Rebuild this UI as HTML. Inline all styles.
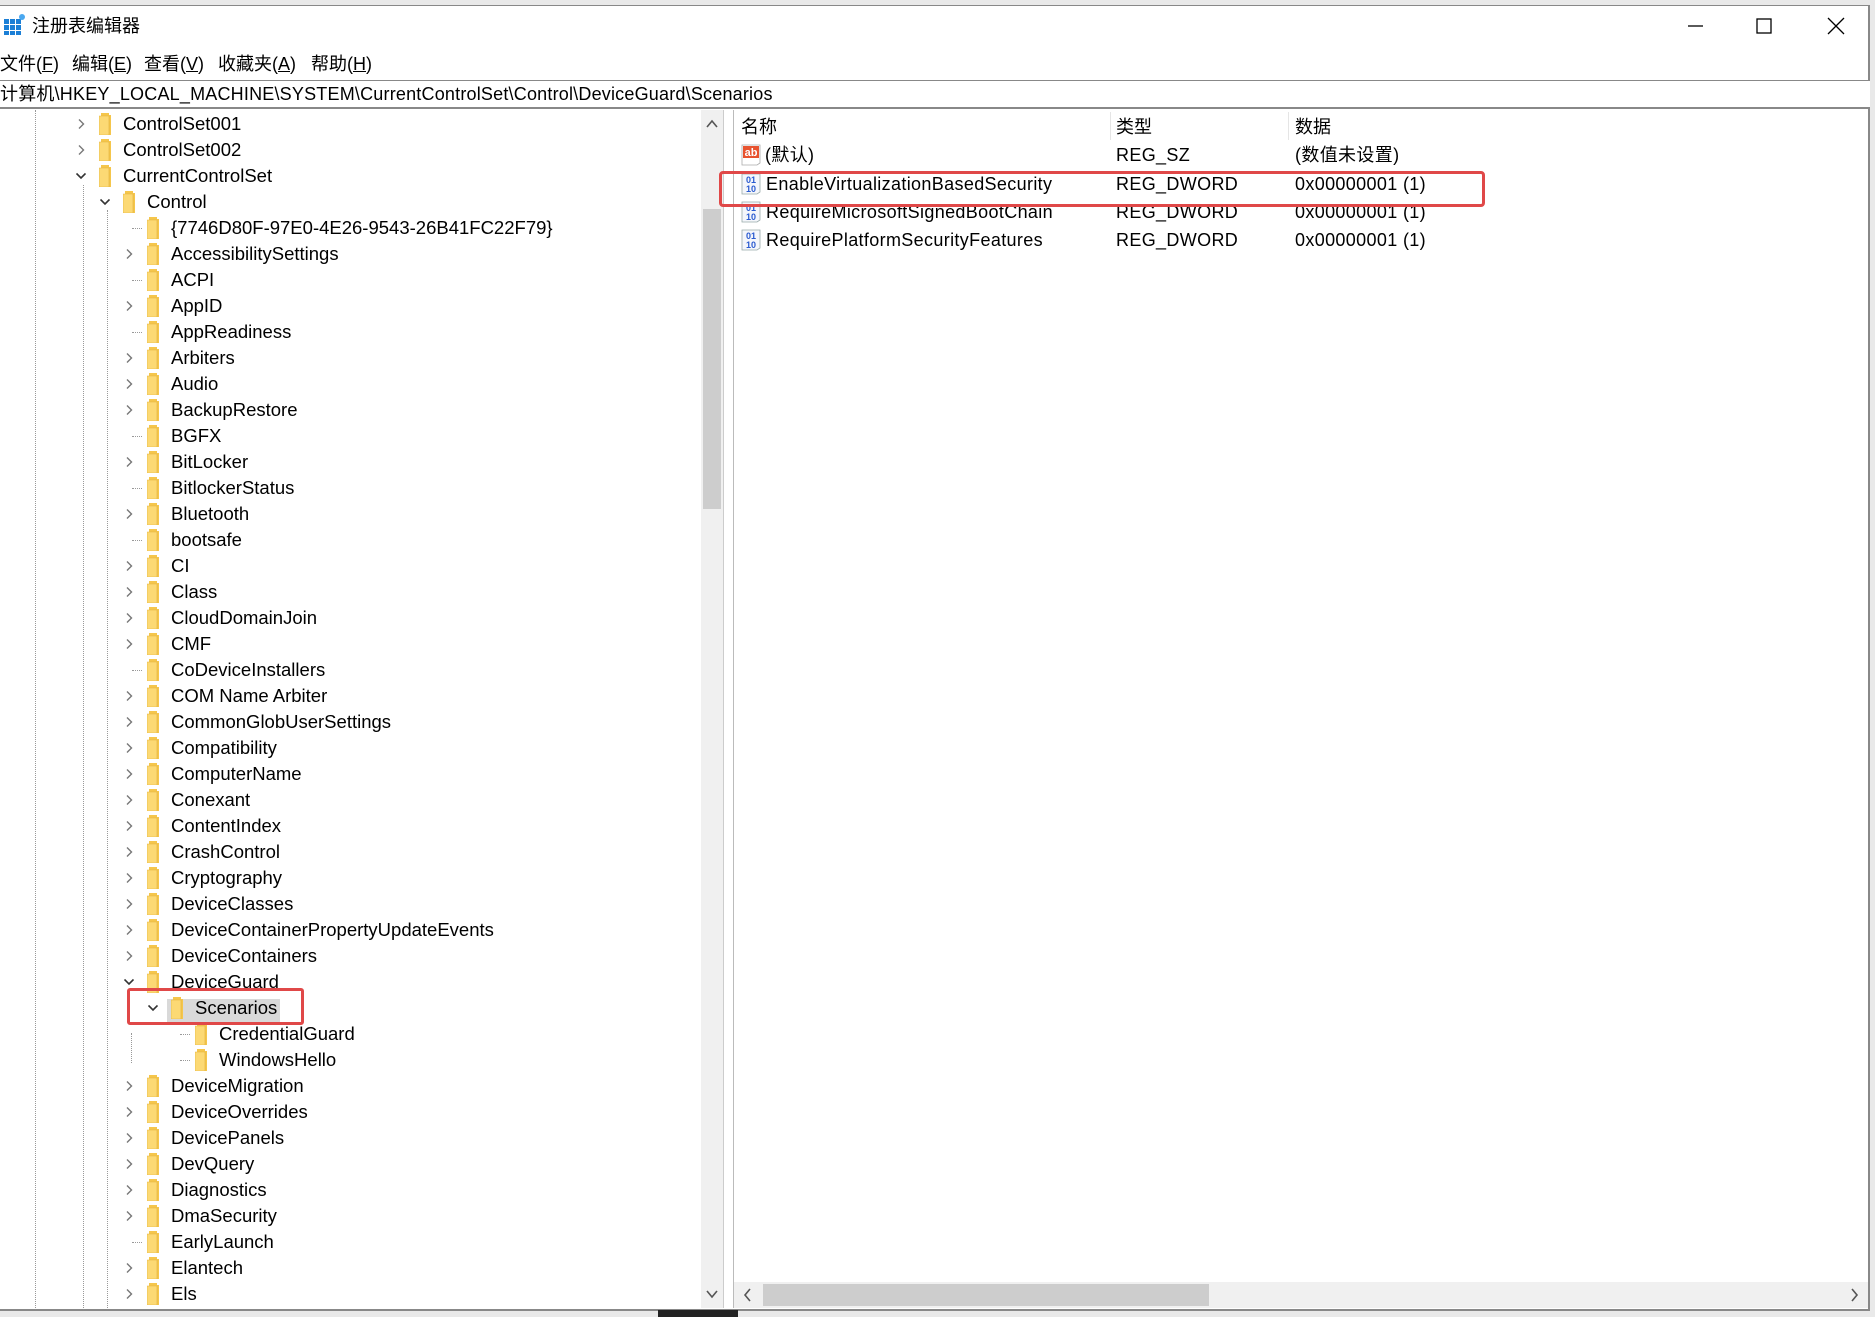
<!DOCTYPE html>
<html><head><meta charset="utf-8">
<style>
*{margin:0;padding:0;box-sizing:border-box}
body{width:1875px;height:1317px;background:#e9e9e9;position:relative;overflow:hidden;font-family:"Liberation Sans","Noto Sans CJK SC",sans-serif;color:#000}
.win{position:absolute;left:0;top:5px;width:1870px;height:1306px;background:#fff;border-top:1px solid #888;border-right:2px solid #888;border-bottom:2px solid #888}
.abs{position:absolute}
.t{position:absolute;font-size:18px;line-height:26px;white-space:nowrap}
.lt{letter-spacing:0.35px}
.r{position:absolute;height:26px;line-height:26px;font-size:18.5px;white-space:nowrap}
.fold{position:absolute;width:12px;height:22px;top:2px}
.chev{position:absolute;top:8px;width:10px;height:10px}
.lh{position:absolute;top:13px;width:10px;border-top:1px dotted #999}
.lv{position:absolute;border-left:1px dotted #999}
.sh{transform:translateY(1px)}
</style></head><body>
<div class="win"></div>
<!-- title -->
<svg class="abs" style="left:4px;top:13px" width="22" height="22" viewBox="0 0 22 22"><rect x="0" y="6" width="5" height="5" fill="#1b7fd6"/><rect x="6" y="6" width="5" height="5" fill="#1b7fd6"/><rect x="0" y="12" width="5" height="5" fill="#1b7fd6"/><rect x="6" y="12" width="5" height="5" fill="#1b7fd6"/><rect x="12" y="12" width="5" height="5" fill="#1b7fd6"/><rect x="0" y="18" width="5" height="4" fill="#1b7fd6"/><rect x="6" y="18" width="5" height="4" fill="#1b7fd6"/><rect x="12" y="18" width="5" height="4" fill="#1b7fd6"/><rect x="12" y="6" width="5" height="5" fill="#1b7fd6"/><circle cx="18" cy="4" r="3" fill="#4aa8f0"/></svg>
<div class="t" style="left:32px;top:13px;font-size:18px">注册表编辑器</div>
<svg class="abs" style="left:1687px;top:20px" width="18" height="12"><line x1="1" y1="6" x2="16" y2="6" stroke="#000" stroke-width="1.3"/></svg>
<svg class="abs" style="left:1756px;top:18px" width="16" height="16"><rect x="1" y="1" width="14" height="14" fill="none" stroke="#000" stroke-width="1.3"/></svg>
<svg class="abs" style="left:1827px;top:17px" width="18" height="18"><path d="M1 1L17 17M17 1L1 17" stroke="#000" stroke-width="1.3"/></svg>
<!-- menu -->
<div class="t" style="left:0;top:51px;font-size:18px">文件(<u>F</u>)</div>
<div class="t" style="left:72px;top:51px;font-size:18px">编辑(<u>E</u>)</div>
<div class="t" style="left:144px;top:51px;font-size:18px">查看(<u>V</u>)</div>
<div class="t" style="left:218px;top:51px;font-size:18px">收藏夹(<u>A</u>)</div>
<div class="t" style="left:311px;top:51px;font-size:18px">帮助(<u>H</u>)</div>
<!-- address -->
<div class="abs" style="left:0;top:80px;width:1870px;height:29px;border-top:1px solid #888;border-bottom:2px solid #888;background:#fff"></div>
<div class="t" style="left:0;top:81px;font-size:18px;letter-spacing:0.2px">计算机\HKEY_LOCAL_MACHINE\SYSTEM\CurrentControlSet\Control\DeviceGuard\Scenarios</div>
<!-- tree pane -->
<div class="abs" style="left:0;top:110px;width:701px;height:1198px;overflow:hidden">
<div style="position:relative;top:-110px">
<div class="lv" style="left:35px;top:110px;height:1200px"></div>
<div class="lv" style="left:83px;top:185px;height:1125px"></div>
<div class="lv" style="left:107px;top:210px;height:1100px"></div>
<div class="lv" style="left:131px;top:1033px;height:30px"></div>
</div></div>
<svg width="0" height="0" style="position:absolute"><defs>
<symbol id="f" viewBox="0 0 12 22"><path d="M2 0h8v2h2v20H2z" fill="#f5c64c"/><path d="M0 3h10v19H0z" fill="#fcd974"/><path d="M0 3h10v19H0z" fill="none" stroke="#e2b23c" stroke-width=".6"/></symbol>
<symbol id="cr" viewBox="0 0 10 10"><path d="M3 0.5L7.5 5L3 9.5" fill="none" stroke="#777" stroke-width="1.4"/></symbol>
<symbol id="cd" viewBox="0 0 10 10"><path d="M0.5 2.5L5 7L9.5 2.5" fill="none" stroke="#333" stroke-width="1.6"/></symbol>
</defs></svg>
<div class="abs" style="left:167px;top:999px;width:113px;height:26px;background:#d9d9d9"></div>
<div class="sh" style="position:absolute;left:0;top:0;width:701px;height:1308px;overflow:hidden">
<div class="r" style="top:110px;left:0"><svg class="chev" style="left:76px"><use href="#cr"/></svg><svg class="fold" style="left:99px"><use href="#f"/></svg><span style="position:absolute;left:123px">ControlSet001</span></div>
<div class="r" style="top:136px;left:0"><svg class="chev" style="left:76px"><use href="#cr"/></svg><svg class="fold" style="left:99px"><use href="#f"/></svg><span style="position:absolute;left:123px">ControlSet002</span></div>
<div class="r" style="top:162px;left:0"><svg class="chev" style="left:76px"><use href="#cd"/></svg><svg class="fold" style="left:99px"><use href="#f"/></svg><span style="position:absolute;left:123px">CurrentControlSet</span></div>
<div class="r" style="top:188px;left:24px"><svg class="chev" style="left:76px"><use href="#cd"/></svg><svg class="fold" style="left:99px"><use href="#f"/></svg><span style="position:absolute;left:123px">Control</span></div>
</div>
<div class="sh" style="position:absolute;left:48px;top:0;width:653px;height:1308px;overflow:hidden">
<div class="r" style="top:214px"><div class="lh" style="left:84px"></div><svg class="fold" style="left:99px"><use href="#f"/></svg><span style="position:absolute;left:123px">{7746D80F-97E0-4E26-9543-26B41FC22F79}</span></div>
<div class="r" style="top:240px"><svg class="chev" style="left:76px"><use href="#cr"/></svg><svg class="fold" style="left:99px"><use href="#f"/></svg><span style="position:absolute;left:123px">AccessibilitySettings</span></div>
<div class="r" style="top:266px"><div class="lh" style="left:84px"></div><svg class="fold" style="left:99px"><use href="#f"/></svg><span style="position:absolute;left:123px">ACPI</span></div>
<div class="r" style="top:292px"><svg class="chev" style="left:76px"><use href="#cr"/></svg><svg class="fold" style="left:99px"><use href="#f"/></svg><span style="position:absolute;left:123px">AppID</span></div>
<div class="r" style="top:318px"><div class="lh" style="left:84px"></div><svg class="fold" style="left:99px"><use href="#f"/></svg><span style="position:absolute;left:123px">AppReadiness</span></div>
<div class="r" style="top:344px"><svg class="chev" style="left:76px"><use href="#cr"/></svg><svg class="fold" style="left:99px"><use href="#f"/></svg><span style="position:absolute;left:123px">Arbiters</span></div>
<div class="r" style="top:370px"><svg class="chev" style="left:76px"><use href="#cr"/></svg><svg class="fold" style="left:99px"><use href="#f"/></svg><span style="position:absolute;left:123px">Audio</span></div>
<div class="r" style="top:396px"><svg class="chev" style="left:76px"><use href="#cr"/></svg><svg class="fold" style="left:99px"><use href="#f"/></svg><span style="position:absolute;left:123px">BackupRestore</span></div>
<div class="r" style="top:422px"><div class="lh" style="left:84px"></div><svg class="fold" style="left:99px"><use href="#f"/></svg><span style="position:absolute;left:123px">BGFX</span></div>
<div class="r" style="top:448px"><svg class="chev" style="left:76px"><use href="#cr"/></svg><svg class="fold" style="left:99px"><use href="#f"/></svg><span style="position:absolute;left:123px">BitLocker</span></div>
<div class="r" style="top:474px"><div class="lh" style="left:84px"></div><svg class="fold" style="left:99px"><use href="#f"/></svg><span style="position:absolute;left:123px">BitlockerStatus</span></div>
<div class="r" style="top:500px"><svg class="chev" style="left:76px"><use href="#cr"/></svg><svg class="fold" style="left:99px"><use href="#f"/></svg><span style="position:absolute;left:123px">Bluetooth</span></div>
<div class="r" style="top:526px"><div class="lh" style="left:84px"></div><svg class="fold" style="left:99px"><use href="#f"/></svg><span style="position:absolute;left:123px">bootsafe</span></div>
<div class="r" style="top:552px"><svg class="chev" style="left:76px"><use href="#cr"/></svg><svg class="fold" style="left:99px"><use href="#f"/></svg><span style="position:absolute;left:123px">CI</span></div>
<div class="r" style="top:578px"><svg class="chev" style="left:76px"><use href="#cr"/></svg><svg class="fold" style="left:99px"><use href="#f"/></svg><span style="position:absolute;left:123px">Class</span></div>
<div class="r" style="top:604px"><svg class="chev" style="left:76px"><use href="#cr"/></svg><svg class="fold" style="left:99px"><use href="#f"/></svg><span style="position:absolute;left:123px">CloudDomainJoin</span></div>
<div class="r" style="top:630px"><svg class="chev" style="left:76px"><use href="#cr"/></svg><svg class="fold" style="left:99px"><use href="#f"/></svg><span style="position:absolute;left:123px">CMF</span></div>
<div class="r" style="top:656px"><div class="lh" style="left:84px"></div><svg class="fold" style="left:99px"><use href="#f"/></svg><span style="position:absolute;left:123px">CoDeviceInstallers</span></div>
<div class="r" style="top:682px"><svg class="chev" style="left:76px"><use href="#cr"/></svg><svg class="fold" style="left:99px"><use href="#f"/></svg><span style="position:absolute;left:123px">COM Name Arbiter</span></div>
<div class="r" style="top:708px"><svg class="chev" style="left:76px"><use href="#cr"/></svg><svg class="fold" style="left:99px"><use href="#f"/></svg><span style="position:absolute;left:123px">CommonGlobUserSettings</span></div>
<div class="r" style="top:734px"><svg class="chev" style="left:76px"><use href="#cr"/></svg><svg class="fold" style="left:99px"><use href="#f"/></svg><span style="position:absolute;left:123px">Compatibility</span></div>
<div class="r" style="top:760px"><svg class="chev" style="left:76px"><use href="#cr"/></svg><svg class="fold" style="left:99px"><use href="#f"/></svg><span style="position:absolute;left:123px">ComputerName</span></div>
<div class="r" style="top:786px"><svg class="chev" style="left:76px"><use href="#cr"/></svg><svg class="fold" style="left:99px"><use href="#f"/></svg><span style="position:absolute;left:123px">Conexant</span></div>
<div class="r" style="top:812px"><svg class="chev" style="left:76px"><use href="#cr"/></svg><svg class="fold" style="left:99px"><use href="#f"/></svg><span style="position:absolute;left:123px">ContentIndex</span></div>
<div class="r" style="top:838px"><svg class="chev" style="left:76px"><use href="#cr"/></svg><svg class="fold" style="left:99px"><use href="#f"/></svg><span style="position:absolute;left:123px">CrashControl</span></div>
<div class="r" style="top:864px"><svg class="chev" style="left:76px"><use href="#cr"/></svg><svg class="fold" style="left:99px"><use href="#f"/></svg><span style="position:absolute;left:123px">Cryptography</span></div>
<div class="r" style="top:890px"><svg class="chev" style="left:76px"><use href="#cr"/></svg><svg class="fold" style="left:99px"><use href="#f"/></svg><span style="position:absolute;left:123px">DeviceClasses</span></div>
<div class="r" style="top:916px"><svg class="chev" style="left:76px"><use href="#cr"/></svg><svg class="fold" style="left:99px"><use href="#f"/></svg><span style="position:absolute;left:123px">DeviceContainerPropertyUpdateEvents</span></div>
<div class="r" style="top:942px"><svg class="chev" style="left:76px"><use href="#cr"/></svg><svg class="fold" style="left:99px"><use href="#f"/></svg><span style="position:absolute;left:123px">DeviceContainers</span></div>
<div class="r" style="top:968px"><svg class="chev" style="left:76px"><use href="#cd"/></svg><svg class="fold" style="left:99px"><use href="#f"/></svg><span style="position:absolute;left:123px">DeviceGuard</span></div>
<div class="r" style="top:994px;left:24px"><svg class="chev" style="left:76px"><use href="#cd"/></svg><svg class="fold" style="left:99px"><use href="#f"/></svg><span style="position:absolute;left:123px">Scenarios</span></div>
<div class="r" style="top:1020px;left:48px"><div class="lh" style="left:84px"></div><svg class="fold" style="left:99px"><use href="#f"/></svg><span style="position:absolute;left:123px">CredentialGuard</span></div>
<div class="r" style="top:1046px;left:48px"><div class="lh" style="left:84px"></div><svg class="fold" style="left:99px"><use href="#f"/></svg><span style="position:absolute;left:123px">WindowsHello</span></div>
<div class="r" style="top:1072px"><svg class="chev" style="left:76px"><use href="#cr"/></svg><svg class="fold" style="left:99px"><use href="#f"/></svg><span style="position:absolute;left:123px">DeviceMigration</span></div>
<div class="r" style="top:1098px"><svg class="chev" style="left:76px"><use href="#cr"/></svg><svg class="fold" style="left:99px"><use href="#f"/></svg><span style="position:absolute;left:123px">DeviceOverrides</span></div>
<div class="r" style="top:1124px"><svg class="chev" style="left:76px"><use href="#cr"/></svg><svg class="fold" style="left:99px"><use href="#f"/></svg><span style="position:absolute;left:123px">DevicePanels</span></div>
<div class="r" style="top:1150px"><svg class="chev" style="left:76px"><use href="#cr"/></svg><svg class="fold" style="left:99px"><use href="#f"/></svg><span style="position:absolute;left:123px">DevQuery</span></div>
<div class="r" style="top:1176px"><svg class="chev" style="left:76px"><use href="#cr"/></svg><svg class="fold" style="left:99px"><use href="#f"/></svg><span style="position:absolute;left:123px">Diagnostics</span></div>
<div class="r" style="top:1202px"><svg class="chev" style="left:76px"><use href="#cr"/></svg><svg class="fold" style="left:99px"><use href="#f"/></svg><span style="position:absolute;left:123px">DmaSecurity</span></div>
<div class="r" style="top:1228px"><div class="lh" style="left:84px"></div><svg class="fold" style="left:99px"><use href="#f"/></svg><span style="position:absolute;left:123px">EarlyLaunch</span></div>
<div class="r" style="top:1254px"><svg class="chev" style="left:76px"><use href="#cr"/></svg><svg class="fold" style="left:99px"><use href="#f"/></svg><span style="position:absolute;left:123px">Elantech</span></div>
<div class="r" style="top:1280px"><svg class="chev" style="left:76px"><use href="#cr"/></svg><svg class="fold" style="left:99px"><use href="#f"/></svg><span style="position:absolute;left:123px">Els</span></div>
</div>
<!-- red box tree -->
<div class="abs" style="left:127px;top:988px;width:177px;height:37px;border:3px solid #e04848;border-radius:3px"></div>
<!-- tree vscroll -->
<div class="abs" style="left:701px;top:110px;width:22px;height:1198px;background:#f0f0f0"></div>
<div class="abs" style="left:703px;top:209px;width:18px;height:300px;background:#cdcdcd"></div>
<svg class="abs" style="left:706px;top:119px" width="12" height="10"><path d="M1 8L6 2L11 8" fill="none" stroke="#555" stroke-width="1.6"/></svg>
<svg class="abs" style="left:706px;top:1289px" width="12" height="10"><path d="M1 2L6 8L11 2" fill="none" stroke="#555" stroke-width="1.6"/></svg>
<!-- splitter -->
<div class="abs" style="left:723px;top:110px;width:11px;height:1198px;background:#fff;border-left:1px solid #ccc;border-right:1px solid #bbb"></div>
<!-- list header -->
<div class="abs" style="left:1110px;top:112px;width:1px;height:28px;background:#e5e5e5"></div>
<div class="abs" style="left:1288px;top:112px;width:1px;height:28px;background:#e5e5e5"></div>
<div class="t" style="left:741px;top:114px;font-size:18px">名称</div>
<div class="t" style="left:1116px;top:114px;font-size:18px">类型</div>
<div class="t" style="left:1295px;top:114px;font-size:18px">数据</div>
<svg width="0" height="0" style="position:absolute"><defs>
<symbol id="bin" viewBox="0 0 20 22"><path d="M1 1h18v18l-3 2H1z" fill="#f4f6fb" stroke="#9aa" stroke-width=".8"/><text x="10" y="10" font-size="9" font-weight="bold" fill="#2a5bd0" text-anchor="middle" font-family="Liberation Sans">01</text><text x="10" y="19" font-size="9" font-weight="bold" fill="#2a5bd0" text-anchor="middle" font-family="Liberation Sans">10</text></symbol>
<symbol id="ab" viewBox="0 0 20 22"><path d="M1 1h18v18l-3 2H1z" fill="#fff" stroke="#aaa" stroke-width=".8"/><rect x="2" y="2" width="16" height="12" fill="#e8532f"/><text x="10" y="12" font-size="11" font-weight="bold" fill="#fff" text-anchor="middle" font-family="Liberation Sans">ab</text></symbol>
</defs></svg>
<svg class="abs" style="left:741px;top:144px" width="20" height="22"><use href="#ab"/></svg>
<div class="t lt" style="left:765px;top:142px">(默认)</div><div class="t lt" style="left:1116px;top:142px">REG_SZ</div><div class="t lt" style="left:1295px;top:142px">(数值未设置)</div>
<svg class="abs" style="left:741px;top:173px" width="20" height="22"><use href="#bin"/></svg>
<div class="t lt" style="left:766px;top:171px">EnableVirtualizationBasedSecurity</div><div class="t lt" style="left:1116px;top:171px">REG_DWORD</div><div class="t lt" style="left:1295px;top:171px">0x00000001 (1)</div>
<svg class="abs" style="left:741px;top:201px" width="20" height="22"><use href="#bin"/></svg>
<div class="t lt" style="left:766px;top:199px">RequireMicrosoftSignedBootChain</div><div class="t lt" style="left:1116px;top:199px">REG_DWORD</div><div class="t lt" style="left:1295px;top:199px">0x00000001 (1)</div>
<svg class="abs" style="left:741px;top:229px" width="20" height="22"><use href="#bin"/></svg>
<div class="t lt" style="left:766px;top:227px">RequirePlatformSecurityFeatures</div><div class="t lt" style="left:1116px;top:227px">REG_DWORD</div><div class="t lt" style="left:1295px;top:227px">0x00000001 (1)</div>
<div class="abs" style="left:719px;top:171px;width:766px;height:36px;border:3px solid #e04848;border-radius:4px"></div>
<!-- hscroll -->
<div class="abs" style="left:734px;top:1282px;width:1134px;height:26px;background:#f0f0f0"></div>
<div class="abs" style="left:763px;top:1284px;width:446px;height:22px;background:#cdcdcd"></div>
<svg class="abs" style="left:743px;top:1288px" width="10" height="14"><path d="M7 1L2 7L7 13" fill="none" stroke="#555" stroke-width="1.6"/></svg>
<svg class="abs" style="left:1849px;top:1288px" width="10" height="14"><path d="M3 1L8 7L3 13" fill="none" stroke="#555" stroke-width="1.6"/></svg>
<!-- bottom -->
<div class="abs" style="left:0;top:1311px;width:1875px;height:6px;background:#e9e9e9"></div>
<div class="abs" style="left:658px;top:1310px;width:80px;height:7px;background:#222"></div>
</body></html>
